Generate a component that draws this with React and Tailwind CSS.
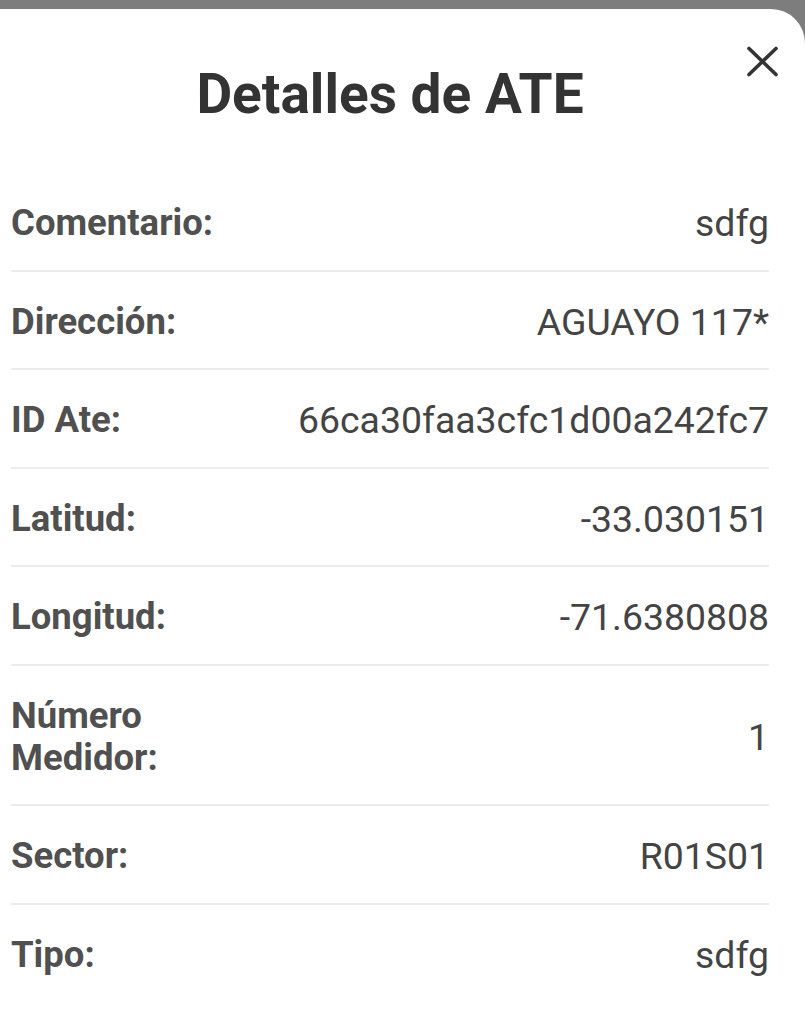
import React from "react";

const rows = [
  { label: "Comentario:", value: "sdfg" },
  { label: "Dirección:", value: "AGUAYO 117*" },
  { label: "ID Ate:", value: "66ca30faa3cfc1d00a242fc7" },
  { label: "Latitud:", value: "-33.030151" },
  { label: "Longitud:", value: "-71.6380808" },
  { label: "Número Medidor:", value: "1" },
  { label: "Sector:", value: "R01S01" },
  { label: "Tipo:", value: "sdfg" },
];

const App = () => {
  return (
    <div
      className="min-h-screen bg-[#7d7d7d] pt-[9px]"
      style={{ fontFamily: "Roboto, 'Liberation Sans', sans-serif" }}
    >
      <div className="relative min-h-[1015px] rounded-tr-[34px] bg-white pl-[11px] pr-[36px] pt-[58px]">
        <button className="absolute right-[26px] top-[37px] text-[#333]" aria-label="Cerrar">
          <svg width="33" height="31" viewBox="0 0 33 31" fill="none">
            <path
              d="M3 2.5 L30 28.5 M30 2.5 L3 28.5"
              stroke="currentColor"
              strokeWidth="3.6"
              strokeLinecap="round"
            />
          </svg>
        </button>

        <h2 className="text-center text-[55px] font-bold leading-[55px] text-[#333]">
          Detalles de ATE
        </h2>

        <div className="mt-[51px]">
          {rows.map((row, i) => (
            <div
              key={row.label}
              className={`flex items-center justify-between gap-4 pt-[29px] pb-[25.5px] ${
                i < rows.length - 1 ? "border-b-2 border-[#ececec]" : ""
              }`}
            >
              <span className="max-w-[280px] text-[36.5px] font-bold leading-[42px] text-[#505050]">
                {row.label}
              </span>
              <span className="text-right text-[37.4px] leading-[42px] text-[#444]">
                {row.value}
              </span>
            </div>
          ))}
        </div>
      </div>
    </div>
  );
};

export default App;
